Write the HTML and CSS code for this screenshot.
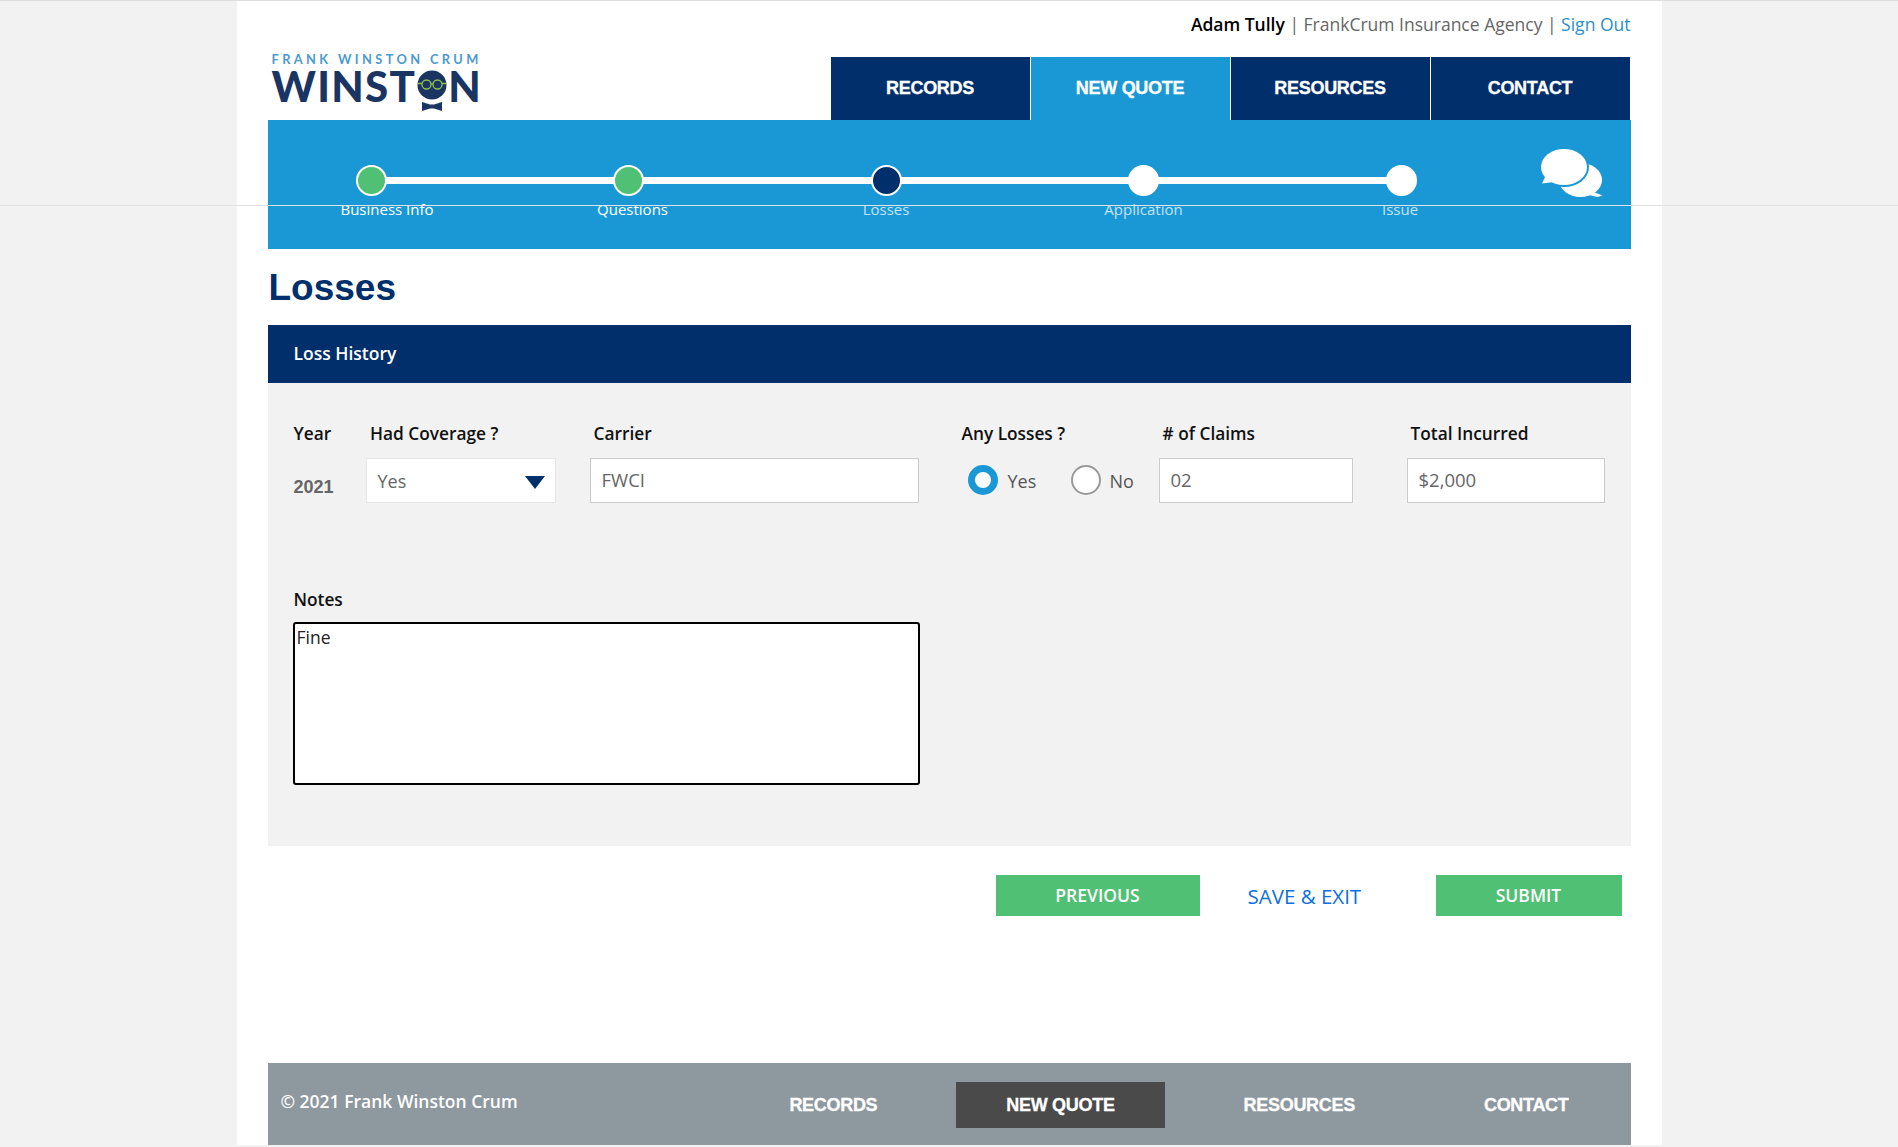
FILE: index.html
```html
<!DOCTYPE html>
<html lang="en">
<head>
<meta charset="utf-8">
<title>Losses</title>
<link rel="stylesheet" href="styles.css">
</head>
<body>
<div class="rule"></div>
<div class="page">
  <div class="user"><b>Adam Tully</b> | FrankCrum Insurance Agency | <a>Sign Out</a></div>
  <header class="head">
    <div class="logo">
      <div class="logo-top">FRANK WINSTON CRUM</div>
      <div class="logo-main">WINST<svg class="logo-face" viewBox="0 0 32 42"><circle cx="16" cy="15" r="14.500" fill="#1b3563"/><circle cx="10.500" cy="14.500" r="4.500" fill="none" stroke="#8cc14c" stroke-width="1.300"/><circle cx="21.500" cy="14.500" r="4.500" fill="none" stroke="#8cc14c" stroke-width="1.300"/><path d="M15 14h2M1.500 13.500h4.500M26 13.500h4.500" stroke="#8cc14c" stroke-width="1.300"/><path d="M6 32l8 2.500h4l8-2.500v9l-8-2.500h-4l-8 2.500z" fill="#1b3563"/></svg>N</div>
    </div>
    <nav class="nav">
      <a class="nav-item">RECORDS</a>
      <a class="nav-item nav-on">NEW QUOTE</a>
      <a class="nav-item">RESOURCES</a>
      <a class="nav-item">CONTACT</a>
    </nav>
  </header>
  <section class="band">
    <div class="steps">
      <div class="step done"><span class="dot"></span><span class="cap cap-a">Business Info</span></div>
      <div class="step done"><span class="dot"></span><span class="cap cap-b">Questions</span></div>
      <div class="step current"><span class="dot"></span><span class="cap dim">Losses</span></div>
      <div class="step"><span class="dot"></span><span class="cap dim">Application</span></div>
      <div class="step last"><span class="dot"></span><span class="cap dim cap-e">Issue</span></div>
    </div>
    <svg class="chat" viewBox="0 0 62 49">
      <ellipse cx="39.500" cy="31" rx="21.500" ry="17" fill="#fff"/>
      <path d="M50 42l11.500 4.500-5 1.500-13-3z" fill="#fff"/>
      <ellipse cx="23" cy="18" rx="25" ry="20" fill="#1a98d5"/>
      <ellipse cx="23" cy="18" rx="23" ry="18" fill="#fff"/>
      <path d="M5 26L1 34.500l12-1.500z" fill="#fff"/>
    </svg>
  </section>
  <h1 class="title">Losses</h1>
  <div class="bar">Loss History</div>
  <section class="panel">
    <div class="row">
      <div class="col col-year"><div class="label">Year</div><div class="year">2021</div></div>
      <div class="col col-cov"><div class="label">Had Coverage ?</div><div class="field select">Yes<i class="arrow"></i></div></div>
      <div class="col col-car"><div class="label">Carrier</div><div class="field">FWCI</div></div>
      <div class="col col-any"><div class="label">Any Losses ?</div>
        <div class="radios"><span class="radio radio-on"></span><span class="rtext">Yes</span><span class="radio"></span><span class="rtext">No</span></div>
      </div>
      <div class="col col-cl"><div class="label"># of Claims</div><div class="field">02</div></div>
      <div class="col col-tot"><div class="label">Total Incurred</div><div class="field">$2,000</div></div>
    </div>
    <div class="label notes-label">Notes</div>
    <div class="notes">Fine</div>
  </section>
  <div class="actions">
    <a class="btn btn-prev">PREVIOUS</a>
    <a class="save">SAVE &amp; EXIT</a>
    <a class="btn btn-sub">SUBMIT</a>
  </div>
  <footer class="foot">
    <div class="copy">© 2021 Frank Winston Crum</div>
    <nav class="foot-nav">
      <a class="foot-item">RECORDS</a>
      <a class="foot-item foot-on">NEW QUOTE</a>
      <a class="foot-item">RESOURCES</a>
      <a class="foot-item">CONTACT</a>
    </nav>
  </footer>
</div>
</body>
</html>
```
FILE: styles.css
```css
* { box-sizing: border-box; }
html, body { margin: 0; padding: 0; }
body {
  height: 1147px;
  overflow: hidden;
  background: #f2f2f2;
  font-family: "Open Sans", sans-serif;
  color: #555;
  border-top: 1px solid #ddd;
}
.rule { position: absolute; left: 0; right: 0; top: 205px; height: 1px; background: #dfe3e6; z-index: 5; }
.page { width: 1425px; height: 1144px; margin: 0 auto; padding: 0 31px 0 31px; background: #fff; }
.user { height: 56px; padding: 11px 0 0; text-align: right; font-size: 17.500px; line-height: 24px; color: #666; }
.user b { font-weight: 600; color: #000; }
.user a { color: #2c8fcb; }
.head { height: 63px; display: flex; justify-content: space-between; }
.logo { width: 220px; padding: 0 0 0 4px; color: #1b3563; font-family: Lato, sans-serif; }
.logo-top { font-size: 12.800px; line-height: 11px; font-weight: 700; letter-spacing: 3.400px; color: #4b9ad0; white-space: nowrap; margin-top: -3px; }
.logo-main { display: flex; font-size: 42px; line-height: 36px; font-weight: 900; letter-spacing: 1.300px; height: 36px; margin-top: 3px; }
.logo-face { flex: none; width: 32px; height: 42px; margin-top: 2px; }
.nav { display: flex; width: 799px; margin-right: 1px; }
.nav-item { width: 200px; background: #002f6c; color: #fff; border-left: 1px solid #fff; font: 700 18px/63px "Liberation Sans", sans-serif; text-align: center; letter-spacing: -.3px; -webkit-text-stroke: .3px #fff; }
.nav-item:first-child { width: 199px; border-left: 0; }
.nav-on { background: #1a98d5; }
.band { height: 129px; background: #1a98d5; display: flex; position: relative; }
.steps { display: flex; margin-left: 88px; padding-top: 44px; }
.step { width: 257.500px; height: 60px; position: relative; display: flex; flex-direction: column; align-items: flex-start; }
.step::after { content: ""; position: absolute; left: 15px; top: 13px; width: 258px; height: 7px; background: #fff; }
.step.last { width: 32px; }
.step.last::after { display: none; }
.dot { width: 31px; height: 31px; border-radius: 50%; border: 2px solid #fff; background: #fff; position: relative; z-index: 1; margin-top: 1px; }
.done .dot { background: #4fc074; }
.current .dot { background: #002f6c; }
.cap { font-size: 15px; line-height: 20px; color: #fff; white-space: nowrap; margin-top: 2.500px; width: 31px; display: flex; justify-content: center; }
.cap.dim { color: #c3e2f3; }
.cap-a { transform: translateX(16px); }
.cap-b { transform: translateX(4px); }
.cap-e { transform: translateX(-1px); }
.chat { position: absolute; left: 1273px; top: 29px; width: 62px; height: 49px; }
.title { margin: 0; height: 76px; padding: 18px 0 0 1px; font: 700 37px/42px "Liberation Sans", sans-serif; color: #002f6c; }
.bar { height: 58px; background: #002f6c; color: #fff; padding-left: 26px; font-size: 17.500px; font-weight: 600; line-height: 56px; }
.panel { height: 463px; background: #f2f2f2; padding: 39px 0 0 25px; }
.row { display: flex; height: 166px; }
.col { flex: none; }
.label { font-size: 17.300px; font-weight: 600; line-height: 24px; color: #111; padding-left: 4px; }
.col-year { width: 73px; padding-left: 1px; }
.col-year .label { padding-left: 0; }
.col-cov .label { padding-left: 4.500px; }
.year { font: 700 18px/24px "Liberation Sans", sans-serif; color: #666; margin-top: 29px; }
.col-cov { width: 224px; }
.col-car { width: 370px; }
.col-any { width: 199px; }
.col-any .label { padding-left: 2px; }
.col-cl { width: 248px; }
.col-tot { width: 198px; }
.field { height: 45px; margin-top: 12px; background: #fff; border: 1px solid #ccc; padding-left: 11px; font-size: 18.500px; line-height: 41px; color: #666; }
.col-cov .field { width: 190px; border-color: #e6e6e6; position: relative; line-height: 44px; font-size: 18px; }
.col-car .field { width: 329px; }
.col-cl .field { width: 194px; }
.col-tot .field { width: 198px; }
.arrow { position: absolute; right: 10px; top: 17px; width: 0; height: 0; border-left: 10px solid transparent; border-right: 10px solid transparent; border-top: 13px solid #002f6c; }
.radios { display: flex; align-items: center; height: 45px; margin-top: 11px; padding-left: 8px; }
.radio { width: 30px; height: 30px; border-radius: 50%; background: #fff; border: 2px solid #999; flex: none; }
.radio-on { border: 7px solid #1a98d5; }
.rtext { font-size: 18px; color: #555; margin: 2px 0 0 9px; }
.rtext:nth-child(2) { width: 63px; margin-left: 10px; }
.notes-label { padding-left: 1px; }
.notes { width: 627px; height: 163px; margin-top: 10px; background: #fff; border: 2px solid #000; border-radius: 3px; padding: 2px 2px; font-size: 17.500px; line-height: 22px; color: #222; }
.actions { height: 217px; padding-top: 29px; display: flex; align-items: flex-start; }
.btn { height: 41px; background: #4fc074; color: #fff; font-size: 17.500px; font-weight: 600; line-height: 40px; text-align: center; }
.btn-prev { width: 204px; margin-left: 728px; }
.save { width: 236px; padding-left: 48px; color: #0d6fe0; font-size: 20.500px; line-height: 43px; }
.btn-sub { width: 186px; }
.foot { height: 82px; background: #8d989f; display: flex; justify-content: space-between; }
.copy { color: #fff; font-size: 17.500px; font-weight: 600; padding: 26px 0 0 13px; line-height: 24px; }
.foot-nav { display: flex; gap: 29px; padding: 19px 12px 0 0; }
.foot-item { height: 46px; padding: 0 50px; color: #fff; font: 700 18px/46px "Liberation Sans", sans-serif; letter-spacing: -.3px; -webkit-text-stroke: .3px #fff; }
.foot-on { background: #4a4a4a; }
```
